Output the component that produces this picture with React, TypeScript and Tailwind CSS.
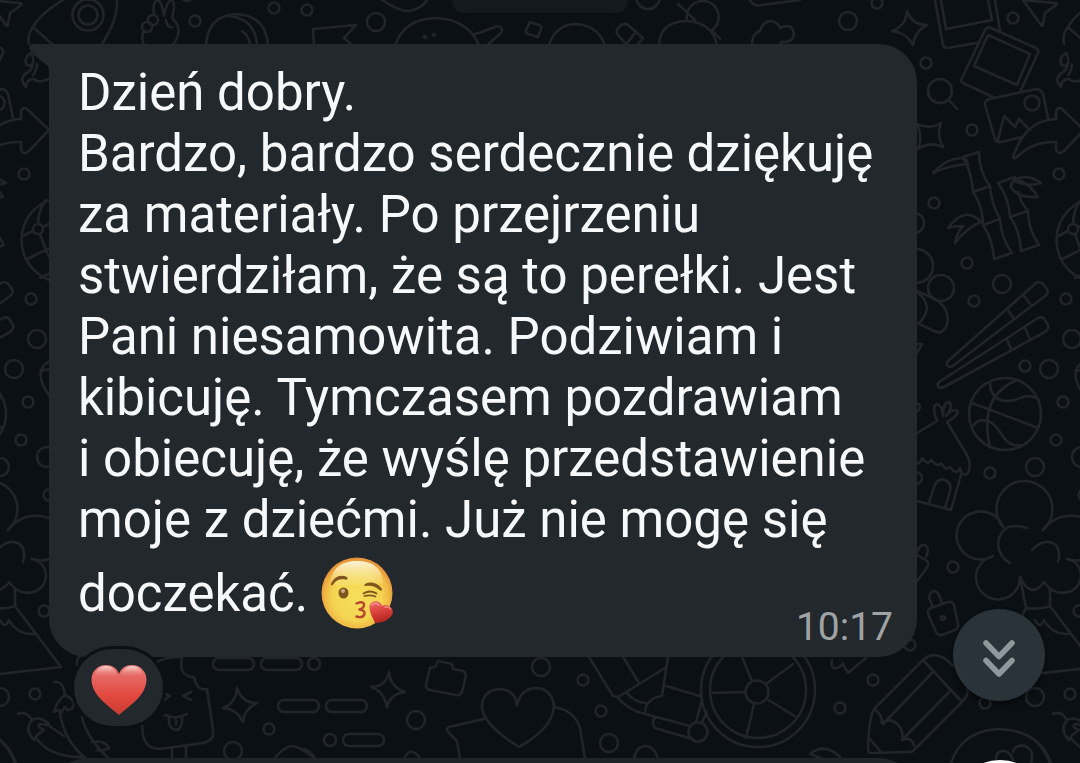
const TILE_WIDTH = 1035;

// [cx, cy, r]
const DOTS = [
  [1013, 18, 5.5], [1032, 103, 7.5], [926, 63, 5.5], [940, 91, 12], [972, 130, 5.5], [934, 203, 5.5],
  [24, 174, 5.5], [967, 263, 5.5], [914, 223, 10], [916, 266, 17], [941, 288, 13], [1002, 284, 9],
  [974, 301, 5.5], [31, 299, 5.5], [37, 339, 9], [14, 369, 9], [1025, 366, 5.5], [28, 402, 5.5],
  [21, 440, 5.5], [0, 467, 9], [990, 473, 5.5], [47, 457, 10], [49, 495, 5.5], [44, 611, 5.5],
  [35, 694, 5.5], [0, 697, 9], [916, 407, 4], [916, 478, 6], [953, 567, 5.5], [910, 645, 5.5],
  [873, 680, 5.5], [840, 708, 5.5], [985, 703, 5.5], [314, 664, 6], [416, 720, 9], [269, 729, 5.5],
  [330, 740, 6], [233, 751, 9], [541, 667, 9], [583, 680, 5.5], [601, 711, 5.5], [609, 743, 9],
  [698, 732, 9.5], [758, 690, 57], [758, 690, 48], [757, 692, 11.5], [88, 15, 15.5], [88, 15, 9.5],
  [64, 240, 42.5], [38, 229, 5], [1005, 414, 36], [376, 22, 9], [425, 37, 1], [434, 35, 1],
  [648, -3, 12], [848, 21, 9], [877, 3, 5.5], [147, 27, 5], [153, 20, 5], [195, 21, 5.5],
  [274, 8, 5.5], [307, 10, 5.5], [943, 618, 2], [187, -5, 6],
];

const STROKES = [
  // sparkles
  'M907 11Q912 25 927 25Q914 32 913 45Q907 33 892 31Q906 26 907 11Z',
  'M917 124Q930 130 941 123Q936 135 943 147Q930 141 918 149Q923 137 917 124Z',
  'M237 688Q242 703 257 703Q244 709 243 722Q237 709 223 708Q236 703 237 688Z',
  'M389 672Q391 688 405 692Q390 694 387 707Q384 691 371 687Q386 687 389 672Z',
  // photos
  'M935 0L943 45Q944 48 948 48L976 43M995 0L1000 31M941 0L946 29L992 20L988 0',
  'M995 98L963 83Q960 81 962 78L985 30Q987 26 991 28L1036 48Q1039 50 1038 53L1020 92M988 35L1030 54L1017 85L974 66Z',
  'M1022 137L1001 142Q997 143 995 139L985 105Q984 101 989 99L1036 89Q1041 89 1043 94L1048 118M998 140L1004 116L1015 127L1019 119L1030 130',
  // paper plane, magnifier handle
  'M1023 0L1041 25Q1043 27 1043 24L1045 13L1056 5Q1058 3 1054 3Z',
  'M949 100L957 109',
  // rocket
  'M63 0Q40 14 33 27Q27 35 29 44M33 27L53 45M117 0Q118 20 102 44',
  'M31 53Q24 57 26 64Q30 68 33 63Q34 57 31 53M33 63Q32 71 25 74Q19 80 26 87Q26 79 34 79Q39 84 48 79M33 75Q37 70 37 64',
  // arrow
  'M-22 157Q-10 120 21 119L21 112Q22 106 27 109L49 130L29 151Q23 156 21 149L21 142Q-2 141 -18 157Q-21 160 -22 157Z',
  // bamboo
  'M963 157L979 152Q979 172 990 186Q991 203 1000 219Q1001 238 1012 253L994 259Q993 240 983 225Q983 206 973 192Q972 173 963 157M973 192L990 186M983 225L1000 219',
  'M933 173Q950 155 966 159L968 164Q950 165 933 173ZM948 228Q965 205 981 222Q968 227 955 243Q957 232 963 226Q954 226 948 228Z',
  'M998 183L1015 177M1018 192Q1021 203 1028 211Q1028 229 1039 245L1021 251Q1020 231 1010 217Q1009 198 998 183M1010 217L1028 211',
  'M1014 180Q1028 173 1041 183Q1028 187 1014 181M1038 197Q1016 198 1011 187Q1011 179 1019 180Q1032 186 1038 197Z',
  // globe
  'M38 224Q38 210 46 200M33 231L23 236M43 227L52 222M40 234L47 253L54 265M27 259L52 247M40 278L52 272',
  'M50 361Q31 370 50 397M41 371L49 369',
  'M917 291L937 300Q952 312 946 327Q941 335 934 331L917 323M917 292Q935 306 920 322M917 344L922 344L917 353',
  // chopsticks
  'M948 361L1036 283Q1040 281 1043 284L1047 289Q1049 293 1045 296L954 365Q949 369 947 365Q946 363 948 361ZM1008 310L1014 319M1024 296L1031 305',
  'M939 382L1038 318Q1043 316 1045 320L1048 325Q1049 329 1045 332L944 387Q939 389 938 386Q937 384 939 382ZM1007 340L1011 349M1025 328L1030 339',
  // basketball
  'M972 403L1038 428M1017 380Q978 396 990 447M990 382Q990 399 1005 401Q1015 401 1020 398Q1028 394 1036 398M973 426Q980 416 992 423Q998 428 1004 438Q1011 447 1022 445',
  // hut
  'M917 433L937 421Q931 406 937 404Q942 405 943 416Q943 402 949 402Q954 406 946 416Q953 408 958 411Q958 416 947 422L967 455Q972 464 968 473Q962 478 960 468Q957 476 950 467Q947 472 941 463Q938 468 931 460Q928 466 922 458Q920 464 917 463',
  'M961 475L951 510L917 501M929 503L934 487Q937 478 945 480Q952 483 950 491L945 508',
  // tree
  'M1003 527A28 28 0 1 1 1043 530M1003 527A24 24 0 1 0 993 556A22 22 0 1 0 1020 577Q1031 600 1044 582Q1054 596 1068 592A17 17 0 0 0 1068 559',
  'M8 530Q24 510 49 518M32 559Q40 562 49 559M1027 528Q1000 520 998 545Q1000 558 1010 563M1032 550Q1045 537 1056 545Q1061 552 1058 562',
  'M1020 577L1026 608Q1040 610 1050 606L1050 588M1050 606L1096 667L1000 678M1026 608L1022 616M1035 620Q1040 630 1044 620Q1052 635 1070 634',
  // padlocks
  'M931 608L948 602Q952 601 954 605L958 624Q959 628 955 630L942 635Q938 636 936 632L928 614Q927 610 931 608ZM933 607L929 598Q930 591 935 591Q939 592 942 603',
  'M917 552Q920 544 925 545Q930 548 926 557M917 555L927 561Q930 564 926 569L917 581',
  // pencil
  'M923 660L875 708Q869 715 868 748Q868 753 872 753L908 752Q913 752 916 748L962 702Q970 694 967 687M923 660Q937 648 953 666M923 660L962 702M932 673L883 724M950 691L903 739',
  'M874 709Q883 715 882 723Q892 716 900 727Q904 735 902 740Q912 736 914 746M869 738L881 752',
  // balloon
  'M951 763Q962 730 1000 729Q1040 731 1051 763M996 760Q996 750 1005 751Q1011 753 1013 760M1013 752Q1015 744 1025 746Q1035 750 1031 763',
  // tulips
  'M18 714Q26 710 32 720Q24 730 34 740Q36 735 44 730Q36 727 40 724Q50 726 48 723Q40 716 32 720M36 738Q50 758 85 757M48 725L64 736M54 682Q63 680 65 695Q57 700 54 712Q58 708 62 712Q65 704 67 710Q74 710 74 702Q70 697 65 695M60 713Q64 740 85 758M82 717Q85 735 108 758M92 742Q105 740 109 748Q102 752 97 750M0 740Q10 750 15 763M77 665Q76 657 83 655',
  // ice lolly
  'M157 662Q165 657 180 657M182 657Q178 675 192 677Q195 677 195 681Q198 691 207 689L213 730Q215 740 203 743L160 749Q146 749 143 735L142 724M172 749V760M186 747V760M164 693L170 696L164 700M191 692L183 696L191 700M165 715Q175 720 187 714M169 717V723Q171 730 177 730Q183 728 182 716M176 718V724',
  'M274 759Q285 745 294 746Q305 750 315 759M300 749Q308 748 315 758M404 759Q410 745 420 758M634 759Q636 746 646 746Q655 747 658 759M810 754Q825 742 840 757M811 754L822 759',
  // camera
  'M430 668L435 667L438 661L452 664L453 669L463 671Q467 673 465 680L462 692Q460 696 456 695L430 690Q425 688 426 684Z',
  // heart card
  'M517 706Q516 690 500 689Q482 690 482 708Q484 725 519 747Q553 728 554 706Q552 689 536 688Q520 689 517 706ZM484 719L449 727Q445 729 448 732L457 741L460 759M554 707Q574 710 580 728L585 759',
  // telescope
  'M589 657L613 696L618 697L665 668M623 657L639 683M668 657L662 696Q646 698 645 712M617 697Q628 710 645 714L690 726M627 693Q634 702 645 703M666 686L700 696M690 726L656 717Q650 722 655 728L689 738M696 722L702 700M702 722L707 712',
  // wheel spokes
  'M742 657L752 681M793 664L766 684M796 717L767 699M746 738L754 704M711 693L745 692',
  'M832 660Q830 670 838 668L843 664L848 673L866 658',
  // along the top
  'M382 0Q400 12 410 11Q422 8 427 0M395 45Q405 18 437 18Q468 20 479 45M473 35L498 26Q505 28 500 34L487 45M530 22L539 25Q542 26 541 29L538 37L528 34Q525 33 526 30Z',
  'M549 45Q556 24 577 24Q598 26 605 45M626 44L618 35Q615 31 619 27Q623 22 628 25L643 38L637 45M635 33L627 43M678 4L695 20M687 20A16 16 0 1 1 712 30L720 39M659 45Q660 22 686 21Q712 22 717 45',
  'M752 45Q752 33 760 31Q763 21 771 21Q778 22 780 28Q792 22 794 34Q793 43 781 42L780 45M750 0Q753 7 762 5L800 0',
  'M144 45Q140 35 145 31M154 14Q152 2 158 0Q162 2 164 16Q167 0 172 0Q176 4 172 18Q180 25 178 35Q176 42 172 45M166 20Q167 28 172 27',
  'M206 45Q208 15 237 14Q266 16 268 45M228 16Q255 18 257 45M242 31Q249 36 250 44M314 45L313 29L356 25L344 38L352 45',
];

// [x, y]
const DASHES = [[213, 658], [261, 658], [278, 700], [326, 700], [343, 734]];

function Wallpaper() {
  return (
    <svg className="absolute inset-0 h-full w-full" fill="none" stroke="#212529" strokeWidth="2.6" strokeLinecap="round" strokeLinejoin="round" aria-hidden="true">
      <g id="doodles">
        {DOTS.map(([cx, cy, r]) => (
          <circle key={`${cx}-${cy}-${r}`} cx={cx} cy={cy} r={r} />
        ))}
        {DASHES.map(([x, y]) => (
          <rect key={`${x}-${y}`} x={x} y={y} width="41" height="12" rx="6" />
        ))}
        {STROKES.map((d) => (
          <path key={d} d={d} />
        ))}
      </g>
      <use href="#doodles" x={-TILE_WIDTH} />
      <use href="#doodles" x={TILE_WIDTH} />
    </svg>
  );
}

function KissEmoji() {
  return (
    <svg viewBox="0 0 72 72" className="mt-[7px] inline-block h-[72px] w-[72px] align-[-18px]" role="img" aria-label="Buziak">
      <defs>
        <radialGradient id="face" cx="0.5" cy="0.55" r="0.52">
          <stop offset="0" stopColor="#f6df5c" />
          <stop offset="0.65" stopColor="#f4d552" />
          <stop offset="0.88" stopColor="#f0b744" />
          <stop offset="1" stopColor="#e6953a" />
        </radialGradient>
        <linearGradient id="shine" x1="0" y1="0" x2="0" y2="1">
          <stop offset="0" stopColor="#fff6d8" />
          <stop offset="1" stopColor="#f8e48a" stopOpacity="0.25" />
        </linearGradient>
        <linearGradient id="kiss" x1="0" y1="0" x2="0.3" y2="1">
          <stop offset="0" stopColor="#f0706c" />
          <stop offset="0.5" stopColor="#dd4440" />
          <stop offset="1" stopColor="#b32621" />
        </linearGradient>
      </defs>
      <circle cx="36" cy="36" r="35.5" fill="url(#face)" />
      <path d="M10 27C10 10 22 4 36 4S62 10 62 27C54 24 44 28 36 28S18 30 10 27Z" fill="url(#shine)" />
      <path d="M10 27C13 19 20 17 26 20C27.500 22 26 23 24 22.500C19 21.500 15 23 12.500 27C11 29 9.500 28.500 10 27Z" fill="#80561f" />
      <path d="M44 27C50 24 57 26 61 32C61 34 60 34 58.500 33C54 29 50 28 45 29C43 29 43 28 44 27Z" fill="#80561f" />
      <ellipse cx="22.500" cy="36" rx="5" ry="5.500" fill="#80561f" />
      <circle cx="22" cy="34" r="2" fill="#c5b08a" />
      <path d="M42.500 36.500Q49 32.500 55.500 36.500M43.500 39Q49 37.500 54.500 39.500" fill="none" stroke="#80561f" strokeWidth="1.800" strokeLinecap="round" />
      <path d="M35.500 46.500Q43 43.500 43 48Q43 51 38.500 52.500Q44 53 43.500 57Q42 61.500 35.500 59.500" fill="none" stroke="#b8452f" strokeWidth="2.400" strokeLinecap="round" strokeLinejoin="round" />
      <path d="M61 49C60 43 49 42 48.500 50C48.500 56 52 61 54 66C60 66 68 64 71.500 57C73.500 51 66 46 61 49Z" fill="url(#kiss)" />
      <path d="M51 48Q54 44.500 58 48M64 50Q68 49 69.500 52" fill="none" stroke="#fbb9b4" strokeWidth="1.500" strokeLinecap="round" opacity="0.6" />
    </svg>
  );
}

function HeartEmoji() {
  return (
    <svg viewBox="0 0 56 51" className="h-[51px] w-14" aria-hidden="true">
      <defs>
        <linearGradient id="heart" x1="0" y1="0" x2="0" y2="1">
          <stop offset="0" stopColor="#e77a76" />
          <stop offset="0.3" stopColor="#e5625c" />
          <stop offset="0.6" stopColor="#e34a40" />
          <stop offset="1" stopColor="#c93a31" />
        </linearGradient>
        <linearGradient id="gloss" x1="0" y1="0" x2="0" y2="1">
          <stop offset="0" stopColor="#fbd5d2" />
          <stop offset="1" stopColor="#f08a86" stopOpacity="0" />
        </linearGradient>
      </defs>
      <path d="M28 51C21 44 1 33 0.500 16C0.500 7 7 1 15 1C21 1 26 4 28 10C30 4 35 1 41 1C49 1 55.500 7 55.500 16C55 33 35 44 28 51Z" fill="url(#heart)" />
      <path d="M4 12C5 5 10 2 15 2C20 2 24 5 26 11C19 15 10 10 4 12Z" fill="url(#gloss)" />
      <path d="M52 12C51 5 46 2 41 2C36 2 32 5 30 11C37 15 46 10 52 12Z" fill="url(#gloss)" />
    </svg>
  );
}

export default function App() {
  return (
    <main className="relative flex h-screen flex-col overflow-hidden bg-[#0b1014] pr-[163px] pl-[49px] font-['Roboto',sans-serif]">
      <Wallpaper />

      {/* Date chip, mostly scrolled out of view */}
      <div className="relative ml-[403px] h-[13px] w-44 shrink-0 rounded-b-[20px] bg-[#14191d]" />

      <article className="relative mt-[31px] flex shrink-0 flex-col rounded-[38px] rounded-tl-none bg-[#23282c] pt-[18px] pr-6 pb-[10px] pl-[29px]">
        <svg viewBox="0 0 21 26" className="absolute top-0 -left-5 h-[26px] w-[21px]" aria-hidden="true">
          <path d="M21 0H3Q-1 1 1 6Q9 15 15 19Q20 22 20 26H21Z" fill="#23282c" />
        </svg>
        <p className="text-[51px] leading-[61px] text-[#f7f8fa]">
          Dzień dobry.
          <br />
          Bardzo, bardzo serdecznie dziękuję za materiały. Po przejrzeniu stwierdziłam, że są to perełki. Jest Pani
          niesamowita. Podziwiam i kibicuję. Tymczasem pozdrawiam i&nbsp;obiecuję, że wyślę przedstawienie moje z dziećmi.
          Już nie mogę się doczekać. <KissEmoji />
        </p>
        <time className="-mt-[22px] self-end text-[39px] leading-10 text-[#a0a3a5]">10:17</time>
      </article>

      <button
        type="button"
        aria-label="Reakcja: serce"
        className="relative -mt-2 ml-[25px] flex h-[77px] w-[89px] shrink-0 items-center justify-center rounded-full bg-[#23282c] pt-1 ring-3 ring-[#0b1014]"
      >
        <HeartEmoji />
      </button>

      <article className="relative mt-8 h-20 shrink-0 rounded-[38px] bg-[#1f2428]" />

      <button
        type="button"
        aria-label="Przewiń na dół"
        className="absolute right-[35px] bottom-[62px] flex h-[92px] w-[92px] items-center justify-center rounded-full bg-[#2a333a] pt-2 shadow-md shadow-black/40"
      >
        <svg viewBox="0 0 32 38" className="h-[38px] w-8" fill="none" stroke="#8f989c" strokeWidth="5.5" strokeLinecap="round" strokeLinejoin="round" aria-hidden="true">
          <path d="M3 3L16 16.500L29 3M3 20.500L16 34L29 20.500" />
        </svg>
      </button>
      <button type="button" aria-label="Wiadomość głosowa" className="absolute right-8 -bottom-[93px] h-24 w-24 rounded-full bg-white" />
    </main>
  );
}
